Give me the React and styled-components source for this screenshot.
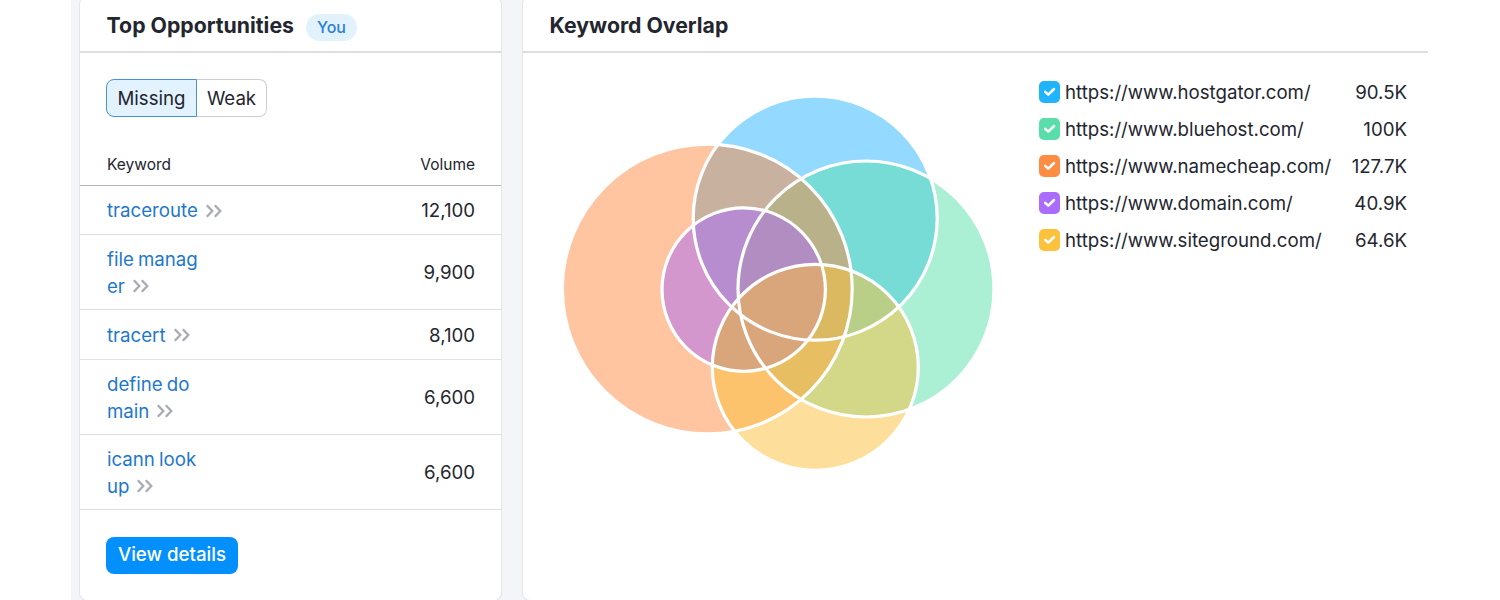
import React from 'react';
import styled, { createGlobalStyle } from 'styled-components';

const keywords = [
    { lines: ['traceroute'], volume: '12,100', height: 49 },
    { lines: ['file manag', 'er'], volume: '9,900', height: 75 },
    { lines: ['tracert'], volume: '8,100', height: 50 },
    { lines: ['define do', 'main'], volume: '6,600', height: 75 },
    { lines: ['icann look', 'up'], volume: '6,600', height: 75 },
];

const domains = [
    { url: 'https://www.hostgator.com/', total: '90.5K', color: '#20b4fc' },
    { url: 'https://www.bluehost.com/', total: '100K', color: '#59ddaa' },
    { url: 'https://www.namecheap.com/', total: '127.7K', color: '#ff8c43' },
    { url: 'https://www.domain.com/', total: '40.9K', color: '#ab6cfe' },
    { url: 'https://www.siteground.com/', total: '64.6K', color: '#fdc23c' },
];

const circles = {
    orange: { cx: 707.3, cy: 289, r: 144.9 },
    blue: { cx: 815.2, cy: 218.2, r: 122 },
    green: { cx: 866, cy: 289, r: 128 },
    yellow: { cx: 815.3, cy: 367.3, r: 103 },
    purple: { cx: 743.7, cy: 289.6, r: 81.7 },
};

//Later regions are painted over the earlier ones
const regions = [
    { sets: ['blue'], fill: '#94d9ff' },
    { sets: ['green'], fill: '#abefd5' },
    { sets: ['orange'], fill: '#ffc5a1' },
    { sets: ['yellow'], fill: '#fddf9b' },
    { sets: ['blue', 'green'], fill: '#77dcd6' },
    { sets: ['orange', 'blue'], fill: '#c9b1a0' },
    { sets: ['orange', 'blue', 'green'], fill: '#b9b18a' },
    { sets: ['green', 'yellow'], fill: '#d3d788' },
    { sets: ['green', 'yellow', 'blue'], fill: '#b9ce86' },
    { sets: ['orange', 'yellow'], fill: '#fdc36c' },
    { sets: ['orange', 'yellow', 'green'], fill: '#e7bf62' },
    { sets: ['orange', 'yellow', 'green', 'blue'], fill: '#dab961' },
    { sets: ['purple'], fill: '#d396cd' },
    { sets: ['purple', 'blue'], fill: '#b78dd0' },
    { sets: ['purple', 'blue', 'green'], fill: '#b18dc2' },
    { sets: ['purple', 'yellow'], fill: '#d9a67c' },
];

const Region = ({ sets, fill }) => {
    const [first, ...rest] = sets;
    return rest.reduce(
        (shape, name) => <g clipPath={`url(#${name})`}>{shape}</g>,
        <circle {...circles[first]} fill={fill} />
    );
};

const Venn = () => (
    <VennStyle viewBox="555 90 450 390">
        <defs>
            {Object.entries(circles).map(([name, circle]) => (
                <clipPath id={name} key={name}>
                    <circle {...circle} />
                </clipPath>
            ))}
        </defs>
        {regions.map((region) => <Region key={region.sets.join('-')} {...region} />)}
        {Object.entries(circles).map(([name, circle]) => (
            <circle key={name} {...circle} fill="none" stroke="#fff" strokeWidth="3.2" />
        ))}
    </VennStyle>
);

const Chevrons = () => (
    <ChevronStyle viewBox="0 0 18 14">
        <path d="M1.8 1.3 L7.3 7 L1.8 12.7 M9.8 1.3 L15.3 7 L9.8 12.7" />
    </ChevronStyle>
);

const App = () => {
    return (
        <PageStyle>
            <GlobalStyle />
            <OpportunitiesStyle>
                <HeaderStyle>
                    <h2>Top Opportunities</h2>
                    <BadgeStyle>You</BadgeStyle>
                </HeaderStyle>
                <PillsStyle>
                    <PillStyle $active>Missing</PillStyle>
                    <PillStyle>Weak</PillStyle>
                </PillsStyle>
                <TableHeadStyle>
                    <span>Keyword</span>
                    <span>Volume</span>
                </TableHeadStyle>
                {keywords.map(({ lines, volume, height }) => (
                    <RowStyle key={lines[0]} $height={height}>
                        <KeywordStyle>
                            {lines.map((line, i) => (
                                <div key={line}>
                                    <span>{line}</span>
                                    {i === lines.length - 1 && <Chevrons />}
                                </div>
                            ))}
                        </KeywordStyle>
                        <span>{volume}</span>
                    </RowStyle>
                ))}
                <ButtonStyle>View details</ButtonStyle>
            </OpportunitiesStyle>
            <OverlapStyle>
                <HeaderStyle>
                    <h2>Keyword Overlap</h2>
                </HeaderStyle>
                <OverlapBodyStyle>
                    <Venn />
                    <LegendStyle>
                        {domains.map(({ url, total, color }) => (
                            <LegendRowStyle key={url}>
                                <CheckboxStyle $color={color}>
                                    <svg viewBox="0 0 21 21">
                                        <path d="M6.2 10.8 L9.3 13.7 L15 8" />
                                    </svg>
                                </CheckboxStyle>
                                <span>{url}</span>
                                <TotalStyle>{total}</TotalStyle>
                            </LegendRowStyle>
                        ))}
                    </LegendStyle>
                </OverlapBodyStyle>
            </OverlapStyle>
        </PageStyle>
    );
};

//Styled Components
const GlobalStyle = createGlobalStyle`
    * {
        box-sizing: border-box;
    }
    body {
        margin: 0;
        overflow: hidden;
        background: white;
        color: #23252f;
        font-family: Inter, sans-serif;
        font-size: 18.65px;
    }
`;

const PageStyle = styled.div`
    display: flex;
    gap: 20px;
    width: 1357px;
    height: 600px;
    margin-left: 71px;
    padding-left: 8px;
    background: #f3f5f9;
    overflow: hidden;
`;

const CardStyle = styled.div`
    height: 605px;
    margin-top: -4px;
    background: white;
    border: 1px solid #e3e5ea;
`;

const OpportunitiesStyle = styled(CardStyle)`
    flex: none;
    width: 423px;
    border-radius: 8px;
`;

const OverlapStyle = styled(CardStyle)`
    flex: 1;
    border-right: none;
    border-radius: 8px 0 0 8px;
`;

const HeaderStyle = styled.div`
    display: flex;
    align-items: center;
    height: 56px;
    padding: 1px 0 0 26.6px;
    border-bottom: 2px solid #dddddf;
    h2 {
        margin: 0;
        font-size: 21.25px;
        font-weight: 700;
        line-height: 28px;
    }
`;

const BadgeStyle = styled.span`
    margin: 5px 0 0 12px;
    padding: 0 11px;
    border-radius: 14px;
    background: #e2f2fd;
    color: #2b80d2;
    font-size: 16px;
    font-weight: 500;
    line-height: 27px;
`;

const PillsStyle = styled.div`
    display: flex;
    margin: 26px 0 0 26px;
`;

const PillStyle = styled.div`
    width: ${({ $active }) => ($active ? 91 : 70)}px;
    height: 38px;
    border: 1px solid ${({ $active }) => ($active ? '#4592d6' : '#cdced4')};
    border-left-width: ${({ $active }) => ($active ? 1 : 0)}px;
    border-radius: ${({ $active }) => ($active ? '8px 0 0 8px' : '0 8px 8px 0')};
    background: ${({ $active }) => ($active ? '#e2f2fe' : 'white')};
    line-height: 36px;
    text-align: center;
`;

const TableHeadStyle = styled.div`
    display: flex;
    justify-content: space-between;
    height: 69px;
    padding: 37px 26px 0 27px;
    border-bottom: 1px solid #b4b5b9;
    font-size: 15.5px;
    line-height: 21px;
`;

const RowStyle = styled.div`
    display: flex;
    align-items: center;
    justify-content: space-between;
    height: ${({ $height }) => $height}px;
    padding: 1px 26px 0 27px;
    border-bottom: 1px solid #dfe0e3;
    line-height: 26.6px;
`;

const KeywordStyle = styled.div`
    color: #1d77ce;
    word-spacing: -1px;
    div {
        display: flex;
        align-items: center;
    }
`;

const ChevronStyle = styled.svg`
    width: 18px;
    height: 14px;
    margin-left: 7px;
    fill: none;
    stroke: #a8abb4;
    stroke-width: 2.3;
`;

const ButtonStyle = styled.button`
    display: block;
    width: 132px;
    height: 37px;
    margin: 27px 0 0 26px;
    padding: 0 0 2px;
    border: none;
    border-radius: 8px;
    background: #0490fc;
    color: white;
    font-family: inherit;
    font-size: 18.7px;
    font-weight: 500;
`;

const OverlapBodyStyle = styled.div`
    display: flex;
    align-items: flex-start;
    padding: 37px 21px 0 32px;
`;

const VennStyle = styled.svg`
    width: 450px;
    height: 390px;
    flex: none;
`;

const LegendStyle = styled.div`
    width: 368px;
    margin-left: 34px;
    margin-top: -17px;
`;

const LegendRowStyle = styled.div`
    display: flex;
    align-items: center;
    height: 37.1px;
`;

const CheckboxStyle = styled.span`
    display: flex;
    width: 21px;
    height: 22px;
    margin-right: 5px;
    border-radius: 5px;
    background: ${({ $color }) => $color};
    svg {
        width: 21px;
        height: 21px;
        fill: none;
        stroke: white;
        stroke-width: 2.5;
        stroke-linecap: round;
        stroke-linejoin: round;
    }
`;

const TotalStyle = styled.span`
    margin-left: auto;
`;

export default App;
